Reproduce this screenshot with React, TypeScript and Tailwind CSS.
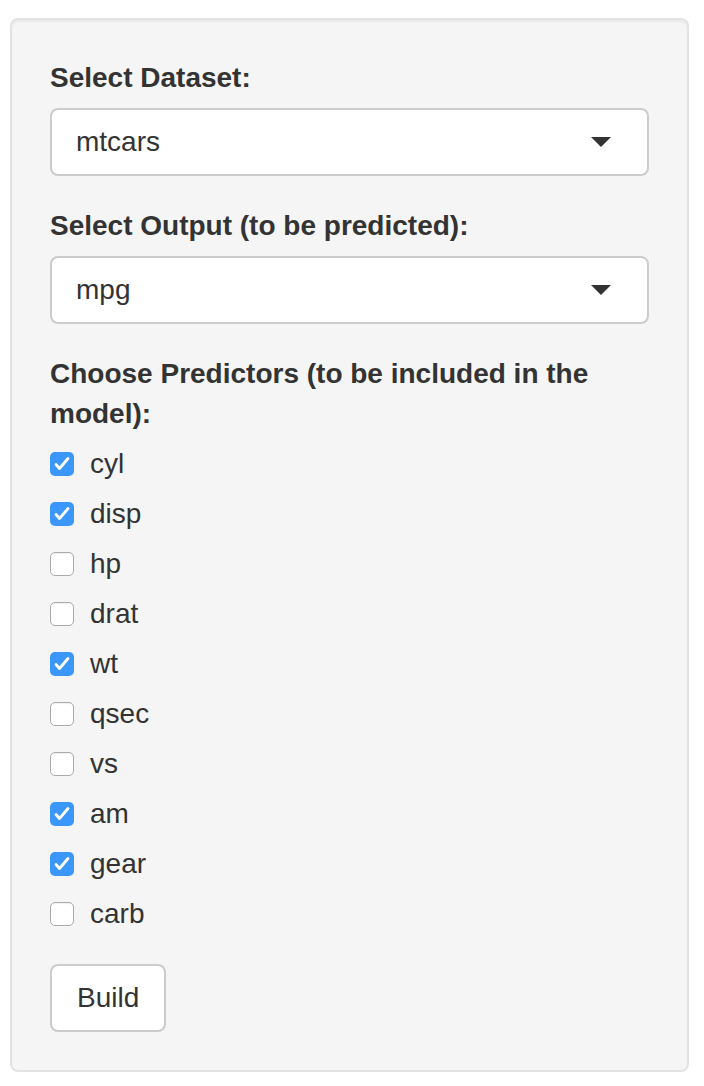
import React, { useState } from "react";

const predictors = [
  { name: "cyl", checked: true },
  { name: "disp", checked: true },
  { name: "hp", checked: false },
  { name: "drat", checked: false },
  { name: "wt", checked: true },
  { name: "qsec", checked: false },
  { name: "vs", checked: false },
  { name: "am", checked: true },
  { name: "gear", checked: true },
  { name: "carb", checked: false },
];

function SelectBox({ value }: { value: string }) {
  return (
    <div className="flex h-[68px] items-center justify-between rounded-[8px] border-2 border-[#cccccc] bg-white pl-[24px] pr-[36px]">
      <span className="text-[28px] leading-[40px] text-[#333333]">{value}</span>
      <svg width="20" height="10" viewBox="0 0 20 10">
        <path d="M0 0 L20 0 L10 10 Z" fill="#333333" />
      </svg>
    </div>
  );
}

function CheckRow({ name, checked, onToggle }: { name: string; checked: boolean; onToggle: () => void }) {
  return (
    <label className="flex h-[40px] cursor-pointer items-center gap-[16px]" onClick={onToggle}>
      {checked ? (
        <span className="h-[24px] w-[24px] rounded-[5px] bg-[#3b97fb]">
          <svg width="24" height="24" viewBox="0 0 24 24" fill="none">
            <path d="M6 12.5 L9.5 16.5 L18 6.5" stroke="white" strokeWidth="2.8" strokeLinecap="round" strokeLinejoin="round" />
          </svg>
        </span>
      ) : (
        <span className="h-[24px] w-[24px] rounded-[5px] border border-[#aaaaaa] bg-white shadow-[inset_0_1px_1px_rgba(0,0,0,0.06)]" />
      )}
      <span className="text-[28px] leading-[40px] text-[#333333]">{name}</span>
    </label>
  );
}

export default function App() {
  const [items, setItems] = useState(predictors);

  const toggle = (i: number) =>
    setItems((prev) => prev.map((p, j) => (j === i ? { ...p, checked: !p.checked } : p)));

  return (
    <div className="min-h-screen bg-white pl-[10px] pr-[15px] pt-[18px] font-['Liberation_Sans',Arial,sans-serif]">
      <div className="rounded-[8px] border-2 border-[#e3e3e3] bg-[#f5f5f5] p-[38px] shadow-[inset_0_2px_2px_rgba(0,0,0,0.05)]">
        {/* Dataset */}
        <div className="mb-[30px]">
          <div className="mb-[10px] text-[28px] font-bold leading-[40px] text-[#333333]">Select Dataset:</div>
          <SelectBox value="mtcars" />
        </div>

        {/* Output */}
        <div className="mb-[30px]">
          <div className="mb-[10px] text-[28px] font-bold leading-[40px] text-[#333333]">Select Output (to be predicted):</div>
          <SelectBox value="mpg" />
        </div>

        {/* Predictors */}
        <div className="mb-[30px]">
          <div className="mb-[10px] text-[28px] font-bold leading-[40px] text-[#333333]">
            Choose Predictors (to be included in the model):
          </div>
          <div className="flex flex-col gap-[10px]">
            {items.map((p, i) => (
              <CheckRow key={p.name} name={p.name} checked={p.checked} onToggle={() => toggle(i)} />
            ))}
          </div>
        </div>

        <button className="h-[68px] rounded-[8px] border-2 border-[#cccccc] bg-white px-[25px] text-[28px] leading-[40px] text-[#333333]">
          Build
        </button>
      </div>
    </div>
  );
}
